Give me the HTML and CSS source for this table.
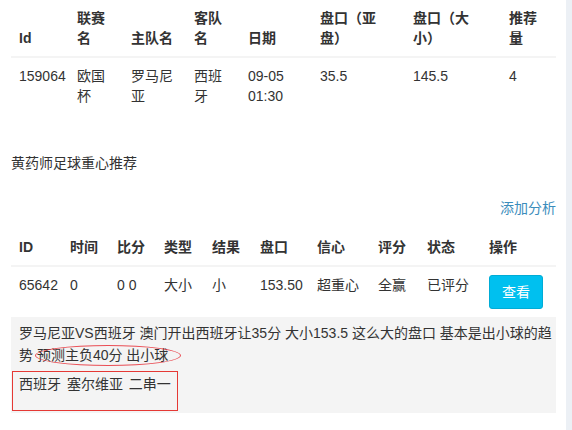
FILE: index.html
```html
<!DOCTYPE html>
<html lang="zh-CN">
<head>
    <meta charset="UTF-8">
    <title>黄药师足球重心推荐</title>
    <link rel="stylesheet" href="styles.css">
</head>
<body>
<div class="page">
    <table class="table match">
        <colgroup>
            <col style="width: 58px">
            <col style="width: 54px">
            <col style="width: 63px">
            <col style="width: 54px">
            <col style="width: 72px">
            <col style="width: 93px">
            <col style="width: 96px">
            <col style="width: 55px">
        </colgroup>
        <thead>
        <tr>
            <th>Id</th>
            <th>联赛名</th>
            <th>主队名</th>
            <th>客队名</th>
            <th>日期</th>
            <th>盘口（亚盘）</th>
            <th>盘口（大小）</th>
            <th>推荐量</th>
        </tr>
        </thead>
        <tbody>
        <tr>
            <td>159064</td>
            <td>欧国杯</td>
            <td>罗马尼亚</td>
            <td>西班牙</td>
            <td>09-05 01:30</td>
            <td>35.5</td>
            <td>145.5</td>
            <td>4</td>
        </tr>
        </tbody>
    </table>

    <div class="section-title">黄药师足球重心推荐</div>

    <div class="tools">
        <a href="#" class="add-link">添加分析</a>
    </div>

    <table class="table tips">
        <colgroup>
            <col style="width: 51px">
            <col style="width: 47px">
            <col style="width: 47px">
            <col style="width: 48px">
            <col style="width: 48px">
            <col style="width: 57px">
            <col style="width: 61px">
            <col style="width: 49px">
            <col style="width: 62px">
            <col style="width: 75px">
        </colgroup>
        <thead>
        <tr>
            <th>ID</th>
            <th>时间</th>
            <th>比分</th>
            <th>类型</th>
            <th>结果</th>
            <th>盘口</th>
            <th>信心</th>
            <th>评分</th>
            <th>状态</th>
            <th>操作</th>
        </tr>
        </thead>
        <tbody>
        <tr>
            <td>65642</td>
            <td>0</td>
            <td>0 0</td>
            <td>大小</td>
            <td>小</td>
            <td>153.50</td>
            <td>超重心</td>
            <td>全赢</td>
            <td>已评分</td>
            <td><a href="#" class="btn btn-info">查看</a></td>
        </tr>
        </tbody>
    </table>

    <div class="analysis">
        <p class="analysis-text">罗马尼亚VS西班牙 澳门开出西班牙让35分 大小153.5 这么大的盘口 基本是出小球的趋势 <span class="circled">预测主负40分 出小球</span></p>
        <div class="pick">西班牙 塞尔维亚 二串一</div>
    </div>
</div>
</body>
</html>
```

FILE: styles.css
```css
html, body {
    margin: 0;
    padding: 0;
    height: 100%;
}

body {
    background-color: #ecf0f5;
    font-family: "Liberation Sans", "Noto Sans CJK SC", sans-serif;
    font-size: 14px;
    line-height: 20px;
    color: #333;
    text-spacing-trim: space-all;
}

.page {
    width: 566px;
    min-height: 100%;
    box-sizing: border-box;
    padding: 0 10px 0 11px;
    background-color: #fff;
}

.table {
    width: 100%;
    table-layout: fixed;
    border-collapse: collapse;
    border-spacing: 0;
}

.table th,
.table td {
    padding: 8px;
    text-align: left;
}

.table th {
    font-weight: bold;
    vertical-align: bottom;
    border-bottom: 2px solid #f4f4f4;
}

.table td {
    vertical-align: top;
}

.match {
    margin-bottom: 39px;
}

.tools {
    margin-top: 25px;
    text-align: right;
}

.add-link {
    color: #3c8dbc;
    text-decoration: none;
}

.tips {
    margin-top: 11px;
}

.btn {
    display: inline-block;
    padding: 6px 12px;
    border: 1px solid #00acd6;
    border-radius: 3px;
    text-decoration: none;
    line-height: 20px;
}

.btn-info {
    background-color: #00c0ef;
    color: #fff;
}

.analysis {
    background-color: #f4f4f4;
    padding: 5px 0 2px 0;
}

.analysis-text {
    margin: 0;
    padding: 0 4px 0 8px;
    line-height: 22px;
}

/* red hand-drawn style ring round the prediction */
.circled {
    position: relative;
    display: inline-block;
}

.circled::after {
    content: "";
    position: absolute;
    left: -2px;
    right: -13px;
    top: 1px;
    bottom: 0;
    border: 1px solid rgba(232, 48, 56, 0.85);
    border-radius: 50%;
    pointer-events: none;
}

.pick {
    width: 166px;
    height: 40px;
    box-sizing: border-box;
    margin: 5px 0 0 1px;
    padding: 2px 6px;
    border: 1px solid #e53935;
    word-spacing: 2px;
}
```
